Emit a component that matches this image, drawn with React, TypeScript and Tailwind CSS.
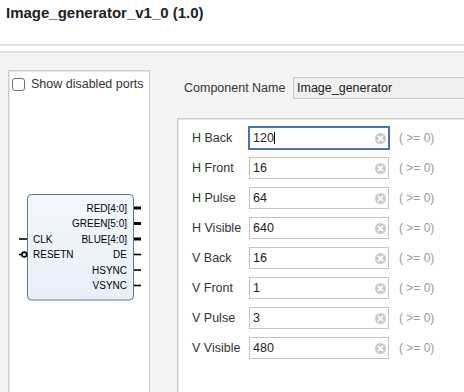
import React from 'react';

const params = [
  { label: 'H Back', value: '120', focused: true },
  { label: 'H Front', value: '16' },
  { label: 'H Pulse', value: '64' },
  { label: 'H Visible', value: '640' },
  { label: 'V Back', value: '16' },
  { label: 'V Front', value: '1' },
  { label: 'V Pulse', value: '3' },
  { label: 'V Visible', value: '480' },
];

const rightPins = [
  { name: 'RED[4:0]', y: 208, bus: true },
  { name: 'GREEN[5:0]', y: 223.5, bus: true },
  { name: 'BLUE[4:0]', y: 239, bus: true },
  { name: 'DE', y: 254.5, bus: false },
  { name: 'HSYNC', y: 270, bus: false },
  { name: 'VSYNC', y: 285.5, bus: false },
];

const ClearIcon: React.FC = () => (
  <svg width="11" height="11" viewBox="0 0 11 11">
    <circle cx="5.5" cy="5.5" r="5.5" fill="#c9c9c9" />
    <path d="M3.4 3.4 L7.6 7.6 M7.6 3.4 L3.4 7.6" stroke="#fff" strokeWidth="1.6" strokeLinecap="round" />
  </svg>
);

const symFont = "'Liberation Sans', Arial, sans-serif";

// IP symbol drawn in page coordinates
const Symbol: React.FC = () => (
  <svg width="140" height="130" viewBox="10 185 140 130" className="block">
    <defs>
      <linearGradient id="blk" x1="0" y1="0" x2="0" y2="1">
        <stop offset="0" stopColor="#f3f7fd" />
        <stop offset="1" stopColor="#e8eff9" />
      </linearGradient>
    </defs>
    <rect x="26.5" y="194.5" width="106" height="105.5" rx="4" fill="url(#blk)" stroke="#62748f" strokeWidth="1" />
    {rightPins.map(p => (
      <g key={p.name}>
        <line x1="133" x2="140" y1={p.y} y2={p.y} stroke="#000" strokeWidth={p.bus ? 3 : 1.6} />
        <text x="126" y={p.y + 3.6} textAnchor="end" fontSize="10" fontFamily={symFont} fill="#000">
          {p.name}
        </text>
      </g>
    ))}
    <line x1="18" x2="26" y1="239" y2="239" stroke="#000" strokeWidth="1.6" />
    <text x="32" y="242.6" fontSize="10" fontFamily={symFont} fill="#000">CLK</text>
    <line x1="18" x2="20.5" y1="254.5" y2="254.5" stroke="#000" strokeWidth="1.6" />
    <circle cx="23.3" cy="254.5" r="2.4" fill="#fff" stroke="#000" strokeWidth="1.6" />
    <text x="32" y="258.1" fontSize="10" fontFamily={symFont} fill="#000">RESETN</text>
  </svg>
);

export default function App() {
  return (
    <div className="w-[464px] h-[392px] overflow-hidden bg-white flex flex-col font-['Liberation_Sans',Arial,sans-serif] text-[#333]">
      {/* Header */}
      <div className="h-[44px] shrink-0 pl-[6px] pt-[4px]">
        <h1 className="text-[15px] leading-[17px] font-bold text-[#222]">Image_generator_v1_0 (1.0)</h1>
      </div>
      <div className="h-[2px] shrink-0 bg-[#e3e3e3]" />
      <div className="h-[5px] shrink-0 bg-white" />
      <div className="h-[2px] shrink-0 bg-[#e3e3e3]" />

      {/* Body */}
      <div className="flex-1 flex bg-[#f4f4f4] min-h-0">
        {/* Symbol panel */}
        <div className="pl-[8px] pt-[17px] shrink-0">
          <div className="w-[142px] h-[330px] bg-white border border-[#cdcdcd] shadow-[inset_1px_1px_0_#e6e6e6] pl-[2px] pt-[6px]">
            <label className="flex items-center h-[14px] text-[12.5px] leading-[14px]">
              <span className="ml-[1px] w-[13px] h-[13px] rounded-[3px] border border-[#6f6f6f] bg-white" />
              <span className="ml-[6px] whitespace-nowrap">Show disabled ports</span>
            </label>
            <div className="mt-[94px]">
              <Symbol />
            </div>
          </div>
        </div>

        {/* Parameters */}
        <div className="flex-1 pl-[27px] pt-[24px] min-w-0">
          <div className="flex items-center h-[22px] pl-[7px]">
            <span className="w-[109px] shrink-0 text-[12.5px] whitespace-nowrap">Component Name</span>
            <div className="w-[220px] shrink-0 h-[22px] bg-[#efefef] border border-[#c6c6c6] pl-[3px] flex items-center text-[12.5px] text-[#222]">
              Image_generator
            </div>
          </div>

          <div className="mt-[19px] w-[320px] h-[300px] bg-white border border-[#cdcdcd] shadow-[inset_1px_1px_0_#e6e6e6] pl-[14px] pt-[8px] flex flex-col gap-[8px]">
            {params.map(p => (
              <div key={p.label} className="flex items-center h-[22px]">
                <span className="w-[57px] shrink-0 text-[12.5px] whitespace-nowrap">{p.label}</span>
                <div
                  className={
                    p.focused
                      ? 'w-[140px] h-[22px] shrink-0 border border-[#4a70b4] ring-1 ring-[#4a70b4] bg-white flex items-center pl-[3px] pr-[2px]'
                      : 'w-[140px] h-[22px] shrink-0 border border-[#c4c4c4] bg-white flex items-center pl-[3px] pr-[2px]'
                  }
                >
                  <span className="text-[12.5px] text-[#222] leading-[14px]">{p.value}</span>
                  {p.focused && <span className="w-[1px] h-[12px] bg-black" />}
                  <span className="flex-1" />
                  <ClearIcon />
                </div>
                <span className="ml-[10px] text-[12px] text-[#9a9a9a] whitespace-nowrap">( &gt;= 0)</span>
              </div>
            ))}
          </div>
        </div>
      </div>
    </div>
  );
}
